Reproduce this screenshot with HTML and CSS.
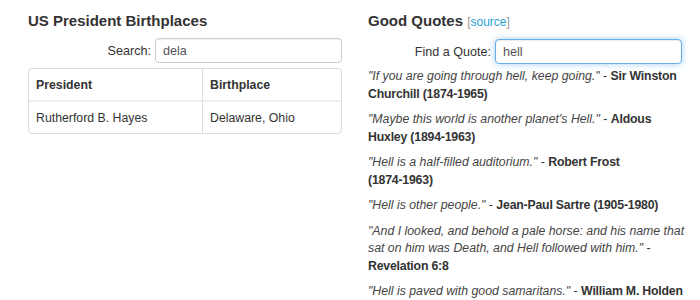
FILE: index.html
```html
<!DOCTYPE html>
<html lang="en">
<head>
    <meta charset="UTF-8">
    <title>Search Filters</title>
    <link rel="stylesheet" href="styles.css">
</head>
<body>
    <div class="page">
        <div class="col">
            <h2>US President Birthplaces</h2>
            <div class="search-row">
                <label for="pres">Search:</label>
                <input id="pres" class="field" type="text" value="dela">
            </div>
            <div class="table-wrap">
                <table>
                    <thead>
                        <tr><th class="c1">President</th><th>Birthplace</th></tr>
                    </thead>
                    <tbody>
                        <tr><td class="c1">Rutherford B. Hayes</td><td>Delaware, Ohio</td></tr>
                    </tbody>
                </table>
            </div>
        </div>

        <div class="col">
            <h2>Good Quotes <small>[<a href="#">source</a>]</small></h2>
            <div class="search-row">
                <label for="quote">Find a Quote:</label>
                <input id="quote" class="field focused" type="text" value="hell">
            </div>
            <div class="quotes">
                <p><em>"If you are going through hell, keep going."</em> - <b>Sir Winston Churchill <span class="dates">(1874-1965)</span></b></p>
                <p><em>"Maybe this world is another planet's Hell."</em> - <b>Aldous Huxley <span class="dates">(1894-1963)</span></b></p>
                <p><em>"Hell is a half-filled auditorium."</em> - <b>Robert Frost <span class="dates">(1874-1963)</span></b></p>
                <p><em>"Hell is other people."</em> - <b>Jean-Paul Sartre <span class="dates">(1905-1980)</span></b></p>
                <p><em>"And I looked, and behold a pale horse: and his name that sat on him was Death, and Hell followed with him."</em> - <b>Revelation 6:8</b></p>
                <p><em>"Hell is paved with good samaritans."</em> - <b>William M. Holden</b></p>
            </div>
        </div>
    </div>
</body>
</html>
```

FILE: styles.css
```css
body {
    font-family: "Liberation Sans", Arial, sans-serif;
    font-size: 12.3px;
    color: #333;
    background: white;
    margin: 0;
}
.page {
    display: flex;
    gap: 26px;
    padding: 0 8px 0 28px;
}
.col {
    width: 314px;
}
.col + .col {
    width: 318px;
}
h2 {
    font-size: 15px;
    font-weight: bold;
    margin: 11px 0 7px;
    line-height: 20px;
}
h2 small {
    font-size: 12px;
    font-weight: normal;
    color: #999;
}
h2 a {
    color: #2a9fd6;
    text-decoration: none;
}
.search-row {
    display: flex;
    align-items: center;
    justify-content: flex-end;
    gap: 4px;
}
.col + .col .search-row {
    padding-right: 4px;
}
label {
    font-size: 12.6px;
}
.field {
    width: 187px;
    height: 25px;
    box-sizing: border-box;
    border: 1px solid #ccc;
    border-radius: 4px;
    padding: 0 7px;
    font-family: inherit;
    font-size: 12.6px;
    color: #555;
    box-shadow: inset 0 1px 1px rgba(0,0,0,0.075);
}
.field.focused {
    border-color: #66afe9;
    box-shadow: inset 0 1px 1px rgba(0,0,0,0.075), 0 0 6px rgba(102,175,233,0.6);
    outline: none;
}
.table-wrap {
    margin-top: 5px;
    border: 1px solid #ddd;
    border-radius: 4px;
    overflow: hidden;
}
table {
    width: 100%;
    border-collapse: collapse;
}
th, td {
    text-align: left;
    padding: 0 7px;
    height: 31px;
}
th {
    border-bottom: 2px solid #eee;
}
.c1 {
    width: 159px;
    border-right: 1px solid #ddd;
}
.quotes {
    margin-top: 4px;
}
.quotes p {
    margin: 0 0 8px;
    line-height: 17.5px;
}
.quotes em {
    color: #444;
}
.quotes b {
    letter-spacing: -0.2px;
}
.dates {
    white-space: nowrap;
}
```
